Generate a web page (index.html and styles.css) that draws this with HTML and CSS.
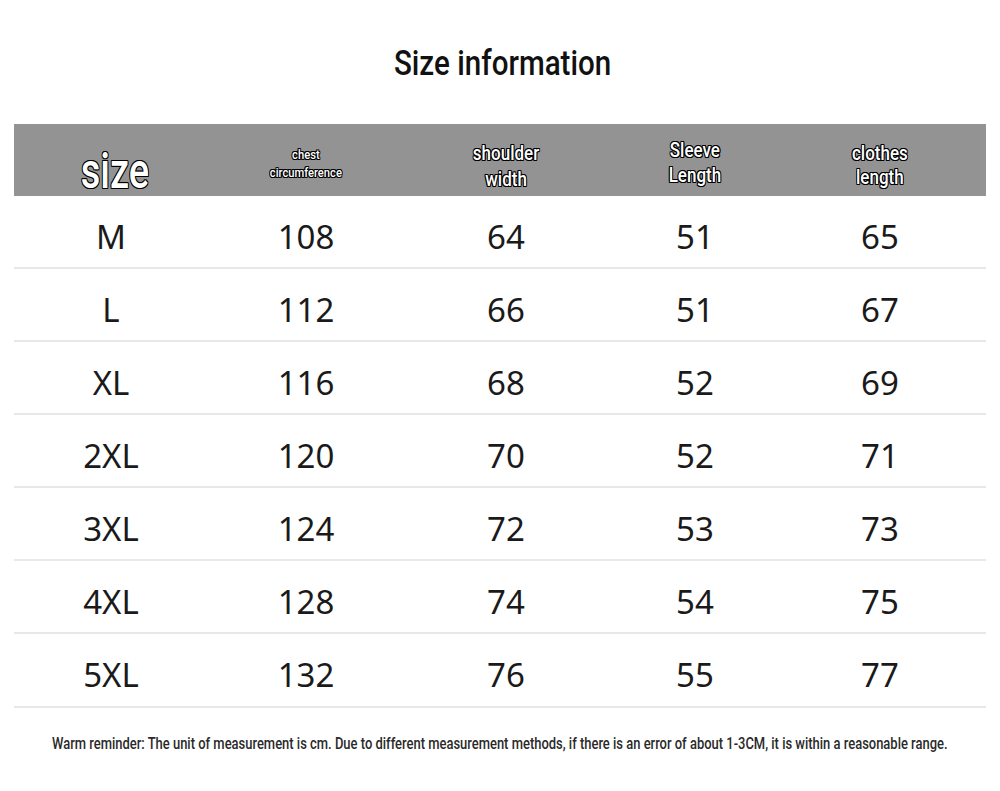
FILE: index.html
```html
<!DOCTYPE html>
<html lang="en">
<head>
<meta charset="utf-8">
<title>Size information</title>
<link rel="stylesheet" href="styles.css">
</head>
<body>
<div class="page">
  <div class="title-wrap"><h1 class="title">Size information</h1></div>
  <div class="table">
    <div class="row head">
      <div class="cell c1"><span class="hl big">size</span></div>
      <div class="cell c2"><span class="hl small">chest<br>circumference</span></div>
      <div class="cell c3"><span class="hl mid">shoulder<br>width</span></div>
      <div class="cell c4"><span class="hl mid sl">Sleeve<br>Length</span></div>
      <div class="cell c5"><span class="hl mid cl">clothes<br>length</span></div>
    </div>
    <div class="row"><div class="cell c1">M</div><div class="cell c2">108</div><div class="cell c3">64</div><div class="cell c4">51</div><div class="cell c5">65</div></div>
    <div class="row"><div class="cell c1">L</div><div class="cell c2">112</div><div class="cell c3">66</div><div class="cell c4">51</div><div class="cell c5">67</div></div>
    <div class="row"><div class="cell c1">XL</div><div class="cell c2">116</div><div class="cell c3">68</div><div class="cell c4">52</div><div class="cell c5">69</div></div>
    <div class="row"><div class="cell c1">2XL</div><div class="cell c2">120</div><div class="cell c3">70</div><div class="cell c4">52</div><div class="cell c5">71</div></div>
    <div class="row"><div class="cell c1">3XL</div><div class="cell c2">124</div><div class="cell c3">72</div><div class="cell c4">53</div><div class="cell c5">73</div></div>
    <div class="row"><div class="cell c1">4XL</div><div class="cell c2">128</div><div class="cell c3">74</div><div class="cell c4">54</div><div class="cell c5">75</div></div>
    <div class="row last"><div class="cell c1">5XL</div><div class="cell c2">132</div><div class="cell c3">76</div><div class="cell c4">55</div><div class="cell c5">77</div></div>
  </div>
  <div class="note-wrap"><p class="note">Warm reminder: The unit of measurement is cm. Due to different measurement methods, if there is an error of about 1-3CM, it is within a reasonable range.</p></div>
</div>
</body>
</html>
```

FILE: styles.css
```css
html, body {
  margin: 0;
  padding: 0;
  background: #ffffff;
}
.page {
  width: 1000px;
  height: 791px;
  overflow: hidden;
}
.title-wrap {
  height: 124px;
  display: flex;
  justify-content: center;
  align-items: flex-start;
}
.title {
  margin: 44px 0 0 6px;
  font-family: Roboto, "Liberation Sans", sans-serif;
  font-weight: 500;
  font-size: 35px;
  line-height: 40px;
  color: #111;
  white-space: nowrap;
  display: inline-block;
  transform: scaleX(0.845);
}
.table {
  margin: 0 14px;
  width: 972px;
}
.row {
  display: grid;
  grid-template-columns: 194px 196px 204px 174px 196px;
  height: 71px;
  border-bottom: 2px solid #e8e8e8;
  font-family: "Noto Sans", sans-serif;
  font-size: 33px;
  color: #1a1a1a;
}
.row.last {
  height: 72px;
}
.row.head {
  height: 72px;
  background: #939393;
  border-bottom: none;
}
.cell {
  display: flex;
  justify-content: center;
  align-items: flex-start;
  padding-top: 21px;
  line-height: 40px;
}
.head .cell {
  padding-top: 0;
  align-items: center;
}
.hl {
  display: inline-block;
  font-family: Roboto, "Liberation Sans", sans-serif;
  font-weight: 700;
  color: #fff;
  text-align: center;
  white-space: nowrap;
  text-shadow: 1px 0 0 #000, -1px 0 0 #000, 0 1px 0 #000, 0 -1px 0 #000,
    1px 1px 0 #000, -1px -1px 0 #000, 1px -1px 0 #000, -1px 1px 0 #000;
}
.hl.big {
  font-size: 50px;
  line-height: 50px;
  font-weight: 500;
  transform: scaleX(0.76);
  margin: 21px 0 0 9px;
}
.hl.small {
  font-size: 13px;
  line-height: 18px;
  font-weight: 500;
  transform: scaleX(0.86);
  margin-top: 8px;
}
.hl.mid {
  font-size: 20px;
  line-height: 26px;
  font-weight: 500;
  transform: scaleX(0.85);
  margin-top: 12px;
}
.hl.sl {
  margin-top: 6px;
  line-height: 25px;
}
.hl.cl {
  margin-top: 10px;
  line-height: 24px;
}
.note-wrap {
  display: flex;
  justify-content: center;
  padding-top: 26px;
}
.note {
  margin: 0;
  font-family: Roboto, "Liberation Sans", sans-serif;
  font-weight: 500;
  font-size: 16px;
  line-height: 20px;
  color: #2a2a2a;
  white-space: nowrap;
  display: inline-block;
  transform: scaleX(0.81);
}
```
